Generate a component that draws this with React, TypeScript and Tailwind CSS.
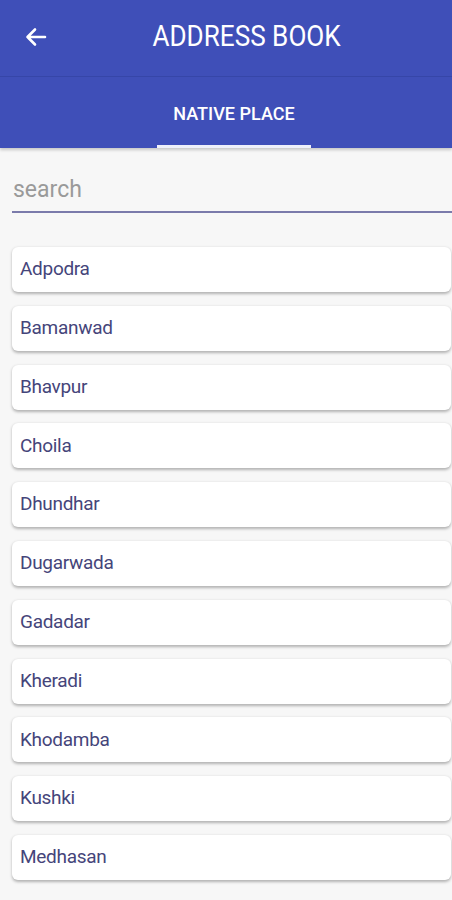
import React from "react";

const places = [
  "Adpodra",
  "Bamanwad",
  "Bhavpur",
  "Choila",
  "Dhundhar",
  "Dugarwada",
  "Gadadar",
  "Kheradi",
  "Khodamba",
  "Kushki",
  "Medhasan",
];

export default function App() {
  return (
    <div
      className="w-[452px] h-[900px] overflow-hidden bg-[#f7f7f7] flex flex-col"
      style={{ fontFamily: "Roboto, 'Liberation Sans', sans-serif" }}
    >
      <div className="bg-[#3f4fb8] shadow-[0_2px_3px_rgba(0,0,0,0.2)] relative z-10">
        <div className="h-[77px] flex items-center relative border-b border-[#3646a8]">
          <svg
            className="absolute left-[24px] top-[25px]"
            width="24"
            height="24"
            viewBox="0 0 24 24"
            fill="none"
            stroke="white"
            strokeWidth="2.6"
            strokeLinecap="round"
            strokeLinejoin="round"
          >
            <path d="M21 12H3.5M11 4.5L3.5 12L11 19.5" />
          </svg>
          <div className="w-full flex justify-center pl-[42px] pb-[4px]">
            <div className="text-white text-[29px] leading-none scale-x-[0.9] whitespace-nowrap">
              ADDRESS BOOK
            </div>
          </div>
        </div>
        <div className="h-[71px] flex justify-center relative pl-[15px]">
          <div className="w-[154px] flex flex-col items-center">
            <div className="flex-1 flex items-center text-white text-[19px] font-medium pt-[7px] whitespace-nowrap scale-x-[0.95]">
              NATIVE PLACE
            </div>
            <div className="h-[3px] w-full bg-[#eef0fa]" />
          </div>
        </div>
      </div>

      <div className="pl-[12px] pt-[30px]">
        <div className="text-[23px] leading-none text-[#9a9a9a] pb-[10px] border-b-2 border-[#7b7bab] pl-[1px]">
          search
        </div>
      </div>

      <div className="pl-[12px] pr-[1px] pt-[34px] flex flex-col gap-[13.8px]">
        {places.map((p) => (
          <div
            key={p}
            className="h-[45px] bg-white rounded-[6px] shadow-[0_1.5px_3px_rgba(0,0,0,0.28)] flex items-center pl-[8px] text-[19px] text-[#45457a] tracking-[-0.3px]"
          >
            {p}
          </div>
        ))}
      </div>
    </div>
  );
}
